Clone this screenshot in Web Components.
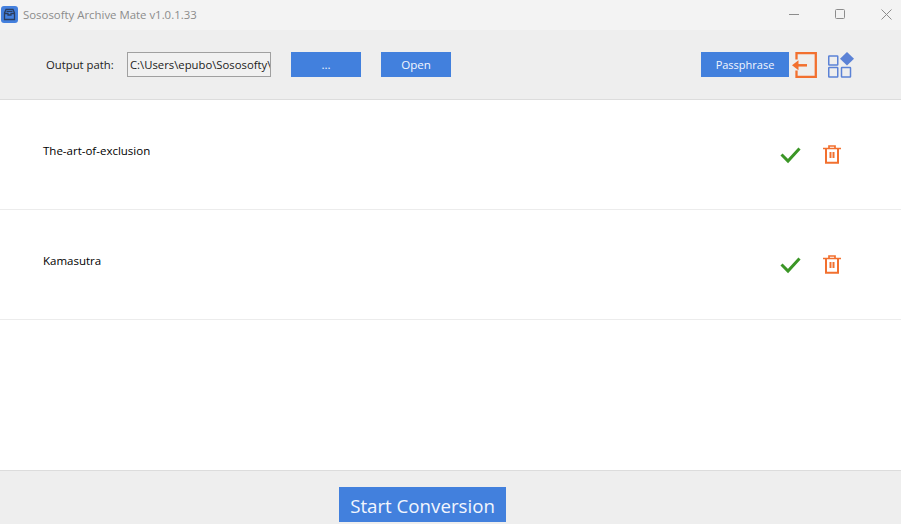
<!DOCTYPE html>
<html>
<head>
<meta charset="utf-8">
<title>Sososofty Archive Mate</title>
<style>
  html, body { margin: 0; height: 100%; }
  body { font-family: "Open Sans", "Noto Sans", sans-serif; font-size: 11.5px; color: #111; overflow: hidden; }
  am-app { height: 524px; }
</style>
</head>
<body>
<am-app>
  <am-titlebar slot="title">Sososofty Archive Mate v1.0.1.33</am-titlebar>
  <am-toolbar slot="tools"></am-toolbar>
  <am-row>The-art-of-exclusion</am-row>
  <am-row>Kamasutra</am-row>
  <am-footer slot="footer"></am-footer>
</am-app>
<script>
class AmApp extends HTMLElement {
  constructor() {
    super();
    this.attachShadow({mode: 'open'}).innerHTML = `
      <style>
        :host { display: flex; flex-direction: column; background: #fff; }
        .list { flex: 1; }
      </style>
      <slot name="title"></slot>
      <slot name="tools"></slot>
      <div class="list"><slot></slot></div>
      <slot name="footer"></slot>
    `;
  }
}

class AmTitlebar extends HTMLElement {
  constructor() {
    super();
    this.attachShadow({mode: 'open'}).innerHTML = `
      <style>
        :host { display: flex; align-items: center; height: 30px; background: #f3f3f3; color: #8b8b8b; font-size: 11.4px; }
        .logo { width: 17px; height: 17px; margin: -2px 5px 0 1px; display: block; }
        .title { flex: 1; position: relative; top: -1px; }
        .ctls { display: flex; gap: 15px; }
        .ctl { width: 30px; height: 30px; display: flex; align-items: center; justify-content: center; padding-bottom: 2px; box-sizing: border-box; }
        .ctl svg { display: block; }
      </style>
      <svg class="logo" viewBox="0 0 17 17">
        <rect width="17" height="17" rx="3" fill="#4480de"/>
        <path d="M5 3.500h7l1.500 3.500v6.500h-10V7z M3.500 7.500h3.500v1.500h3V7.500h3.500" fill="none" stroke="#2b3d5e" stroke-width="1.300"/>
        <path d="M5.500 5.500h6" stroke="#2b3d5e" stroke-width="1"/>
      </svg>
      <span class="title"><slot></slot></span>
      <div class="ctls">
        <div class="ctl" style="margin-right:1px"><svg width="10" height="10"><path d="M0 5.500h10" stroke="#8c8c8c"/></svg></div>
        <div class="ctl" style="margin-right:1px"><svg width="10" height="10"><rect x="0.500" y="0.500" width="9" height="9" rx="1" fill="none" stroke="#8c8c8c"/></svg></div>
        <div class="ctl"><svg width="11" height="11"><path d="M0.500 0.500l10 10M10.500 0.500l-10 10" stroke="#8c8c8c"/></svg></div>
      </div>
    `;
  }
}

class AmButton extends HTMLElement {
  constructor() {
    super();
    this.attachShadow({mode: 'open'}).innerHTML = `
      <style>
        :host { display: flex; align-items: center; justify-content: center; height: 25px; background: #4280dd; color: #f2f6fd; font-size: 11.6px; box-sizing: border-box; }
      </style>
      <slot></slot>
    `;
  }
}

class AmToolbar extends HTMLElement {
  constructor() {
    super();
    this.attachShadow({mode: 'open'}).innerHTML = `
      <style>
        :host { display: flex; align-items: center; height: 70px; box-sizing: border-box; padding: 0 47px 0 46px; background: #eeeeee; border-bottom: 1px solid #dcdcdc; font-size: 11.300px; color: #222; }
        .label { width: 81px; white-space: nowrap; }
        .path { width: 144px; height: 25px; box-sizing: border-box; border: 1px solid #a0a0a0; background: #f1f1f1; padding: 0 2px; line-height: 23px; overflow: hidden; white-space: nowrap; color: #222; }
        .browse { width: 70px; margin-left: 20px; }
        .open { width: 70px; margin-left: 20px; }
        .spacer { flex: 1; }
        .pass { width: 88px; font-size: 11px; }
        svg { display: block; }
        .logout { margin: 0 10px 0 3px; }
      </style>
      <span class="label">Output path:</span>
      <div class="path">C:\\Users\\epubo\\Sososofty\\Archive</div>
      <am-button class="browse">...</am-button>
      <am-button class="open">Open</am-button>
      <div class="spacer"></div>
      <am-button class="pass">Passphrase</am-button>
      <svg class="logout" width="26" height="26" viewBox="0 0 26 26">
        <path d="M4.500 7.500V1.200h19.300v23.600H4.500v-6.300" fill="none" stroke="#f2702f" stroke-width="2.300"/>
        <path d="M15 13.300H5" stroke="#f2702f" stroke-width="2.500"/>
        <path d="M0 13.300L6.500 8.300v10z" fill="#f2702f"/>
      </svg>
      <svg width="26" height="26" viewBox="0 0 26 26">
        <g fill="none" stroke="#5b82d6" stroke-width="1.500">
          <rect x="0.750" y="4" width="9" height="9" rx="0.500"/>
          <rect x="0.750" y="15.500" width="9" height="9.500" rx="0.500"/>
          <rect x="13.500" y="15.500" width="9" height="9.500" rx="0.500"/>
        </g>
        <path d="M19 0L26 6.800l-7 6.800L12 6.800z" fill="#5b82d6"/>
      </svg>
    `;
  }
}

class AmRow extends HTMLElement {
  constructor() {
    super();
    this.attachShadow({mode: 'open'}).innerHTML = `
      <style>
        :host { display: flex; height: 110px; box-sizing: border-box; padding: 43px 60px 0 43px; border-bottom: 1px solid #ececec; font-size: 11.500px; color: #000; }
        .name { flex: 1; line-height: 16px; }
        .actions { display: flex; gap: 21px; margin-top: 2px; }
        svg { display: block; }
      </style>
      <div class="name"><slot></slot></div>
      <div class="actions">
        <svg width="22" height="20" viewBox="0 0 22 20"><path d="M1.500 9.500l6.500 6.500L19.500 3.500" fill="none" stroke="#3b9626" stroke-width="3"/></svg>
        <svg width="18" height="20" viewBox="0 0 18 20">
          <path d="M0 3.500h18M6 3V1h6V3" fill="none" stroke="#f2702f" stroke-width="1.700"/>
          <path d="M3 4v13.700h12V4" fill="none" stroke="#f2702f" stroke-width="2"/>
          <path d="M7.500 7v6M10.500 7v6" stroke="#f2702f" stroke-width="2"/>
        </svg>
      </div>
    `;
  }
}

class AmFooter extends HTMLElement {
  constructor() {
    super();
    this.attachShadow({mode: 'open'}).innerHTML = `
      <style>
        :host { display: block; height: 54px; box-sizing: border-box; padding: 16px 0 0 339px; background: #eeeeee; border-top: 1px solid #dcdcdc; }
        am-button { width: 167px; height: 35px; font-size: 18.700px; padding-top: 1px; }
      </style>
      <am-button>Start Conversion</am-button>
    `;
  }
}

customElements.define('am-button', AmButton);
customElements.define('am-app', AmApp);
customElements.define('am-titlebar', AmTitlebar);
customElements.define('am-toolbar', AmToolbar);
customElements.define('am-row', AmRow);
customElements.define('am-footer', AmFooter);
</script>
</body>
</html>
